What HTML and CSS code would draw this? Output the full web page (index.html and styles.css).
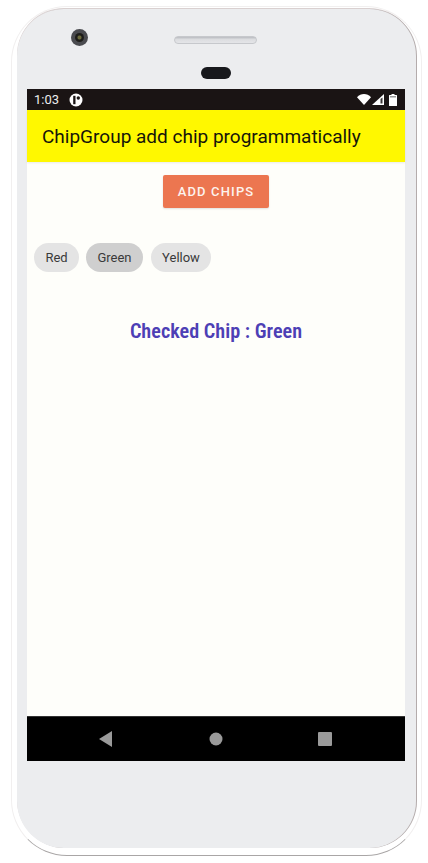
FILE: index.html
```html
<!DOCTYPE html>
<html lang="en">
<head>
<meta charset="utf-8">
<title>ChipGroup add chip programmatically</title>
<link rel="stylesheet" href="styles.css">
</head>
<body>
<div class="shell">
  <div class="phone">
    <div class="bezel-top">
      <div class="camera"><span class="lens"></span></div>
      <div class="bezel-center">
        <div class="speaker"></div>
        <div class="sensor"></div>
      </div>
    </div>
    <div class="screen">
      <div class="statusbar">
        <span class="time">1:03</span>
        <svg class="app-icon" width="14" height="14" viewBox="0 0 14 14"><circle cx="7" cy="7" r="6.5" fill="#fff"/><path d="M4.2 2.8h2.3v8.4H4.2z" fill="#1a1414"/><circle cx="9.3" cy="5" r="1.7" fill="#1a1414"/></svg>
        <span class="status-spacer"></span>
        <svg class="wifi" width="14" height="11" viewBox="0 0 14 11"><path d="M0 3.2C2 1.2 4.4 0 7 0s5 1.200 7 3.200L7 11z" fill="#fff"/></svg>
        <svg class="signal" width="12" height="11" viewBox="0 0 12 11"><path d="M12 0v11H0z" fill="#fff"/><path d="M10.500 3.500v6H8.500V5z" fill="#3a3636"/></svg>
        <svg class="battery" width="8" height="12" viewBox="0 0 8 12"><path d="M2.500 0h3v1H7.500a.5.5 0 0 1 .5.5V11.500a.5.5 0 0 1-.5.5H.5a.5.5 0 0 1-.5-.5V1.500A.5.5 0 0 1 .5 1h2z" fill="#fff"/><path d="M1 2h6v1.500H1z" fill="#999"/></svg>
      </div>
      <header class="appbar">ChipGroup add chip programmatically</header>
      <main class="content">
        <button class="add-btn" type="button">ADD CHIPS</button>
        <div class="chips">
          <span class="chip chip-red">Red</span>
          <span class="chip chip-green">Green</span>
          <span class="chip chip-yellow">Yellow</span>
        </div>
        <p class="checked">Checked Chip : Green</p>
      </main>
      <nav class="navbar">
        <svg width="14" height="16" viewBox="0 0 14 16"><path d="M13 0v16L0 8z" fill="#9a9a9a"/></svg>
        <svg width="14" height="14" viewBox="0 0 14 14"><circle cx="7" cy="7" r="6.500" fill="#9a9a9a"/></svg>
        <svg width="14" height="14" viewBox="0 0 14 14"><rect width="14" height="14" rx="1" fill="#9a9a9a"/></svg>
      </nav>
    </div>
  </div>
</div>
</body>
</html>
```
FILE: styles.css
```css
* { box-sizing: border-box; }
html, body { margin: 0; padding: 0; background: #fff; }
body { width: 428px; height: 863px; overflow: hidden; font-family: Roboto, "Liberation Sans", sans-serif; }

.shell {
  width: 411px;
  height: 850px;
  margin: 6px 0 0 11px;
  padding: 2px 5px 6px 5px;
  border-radius: 56px;
  border: 1px solid #f1efef;
  border-bottom-color: #a9a6a6;
  background: #fff;
}
.phone {
  height: 839px;
  width: 399px;
  padding: 0 12px 0 10px;
  border-radius: 47px;
  background: #ecedef;
  box-shadow: 1px 0 0 #b4acac, 0 -1px 0 #d9d0d0;
}

.bezel-top {
  height: 80px;
  display: grid;
  grid-template-columns: 60px 1fr 60px;
}
.camera {
  width: 17px;
  height: 17px;
  margin: 20px 0 0 44px;
  border-radius: 50%;
  background: #4a4b4f;
  display: flex;
  align-items: center;
  justify-content: center;
}
.lens {
  width: 9px;
  height: 9px;
  border-radius: 50%;
  background: radial-gradient(circle, #6b6a3c 0 1.500px, #1d1d1a 2.500px);
}
.bezel-center {
  grid-column: 2;
  display: flex;
  flex-direction: column;
  align-items: center;
}
.speaker {
  width: 83px;
  height: 8px;
  margin-top: 27px;
  border-radius: 4px;
  background: linear-gradient(#b9bbc0, #dcdde0 40%, #e4e5e8);
  border: 1px solid #c6c8cc;
}
.sensor {
  width: 30px;
  height: 12px;
  margin-top: 23px;
  border-radius: 6px;
  background: #17181c;
}

.screen { width: 378px; height: 672px; display: flex; flex-direction: column; background: #fefefa; }

.statusbar {
  height: 21px;
  flex: none;
  padding: 0 8px 0 7px;
  display: flex;
  align-items: center;
  background: #1a1414;
  color: #ececec;
  font-size: 13px;
}
.app-icon { margin-left: 10px; }
.status-spacer { flex: 1; }
.wifi { margin-right: 1px; }
.signal { margin-right: 5px; }

.appbar {
  height: 52px;
  flex: none;
  padding: 0 15px;
  display: flex;
  align-items: center;
  background: #fff800;
  color: #15150a;
  font-size: 19px;
  font-weight: 400;
  white-space: nowrap;
  box-shadow: 0 1px 2px rgba(0,0,0,.08);
}

.content {
  flex: 1;
  padding-top: 13px;
  display: flex;
  flex-direction: column;
  align-items: stretch;
}
.add-btn {
  align-self: center;
  width: 106px;
  height: 33px;
  padding: 0;
  border: 0;
  border-radius: 2px;
  background: #ec7650;
  color: #fdf3ee;
  font: 500 13px Roboto, sans-serif;
  letter-spacing: 1.150px;
  box-shadow: 0 1px 2px rgba(0,0,0,.12);
}
.chips {
  margin-top: 35px;
  padding-left: 7px;
  display: flex;
  gap: 7px;
}
.chip {
  height: 29px;
  display: flex;
  align-items: center;
  justify-content: center;
  border-radius: 15px;
  background: #e4e4e4;
  color: #3a3a3a;
  font-size: 13px;
}
.chip-red { width: 45px; }
.chip-green { width: 57px; background: #cfcfcf; }
.chip-yellow { width: 60px; margin-left: 1px; }
.checked {
  margin: 47px 0 0;
  text-align: center;
  color: #4d3fb5;
  font-size: 20.200px;
  font-weight: 600;
  font-stretch: 75%;
  line-height: 24px;
}

.navbar {
  height: 45px;
  flex: none;
  padding: 0 73px 0 72px;
  display: flex;
  align-items: center;
  justify-content: space-between;
  background: #000;
  border-top: 1px solid #333;
}
```
